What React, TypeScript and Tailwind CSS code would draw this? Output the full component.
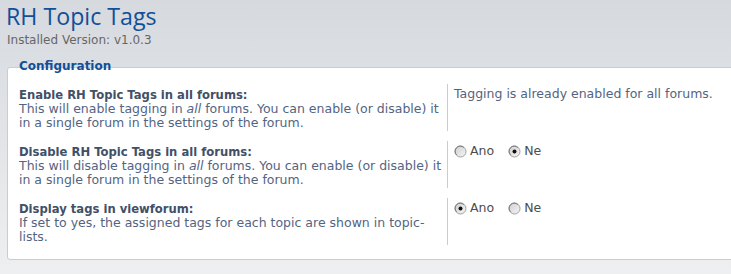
import React from "react";

function Radio({ checked }: { checked: boolean }) {
  return (
    <svg width="13" height="13" viewBox="0 0 13 13" className="shrink-0">
      <defs>
        <linearGradient id={checked ? "rg1" : "rg0"} x1="0" y1="0" x2="1" y2="1">
          <stop offset="0" stopColor="#cfcfcf" />
          <stop offset="1" stopColor="#f6f6f6" />
        </linearGradient>
      </defs>
      <circle cx="6.5" cy="6.5" r="5.5" fill={`url(#${checked ? "rg1" : "rg0"})`} stroke="#a0a0a0" strokeWidth="1" />
      <path d="M2.6 9.8 A5 5 0 0 1 9.8 2.6" fill="none" stroke="#7a7a7a" strokeWidth="1" />
      {checked && <circle cx="6.5" cy="6.5" r="2" fill="#111" />}
    </svg>
  );
}

function RadioPair({ yes }: { yes: boolean }) {
  return (
    <div className="flex items-center text-[12.5px] leading-[14px] text-[#4d4d4d]">
      <label className="flex items-center gap-[3px]">
        <Radio checked={yes} />
        <span>Ano</span>
      </label>
      <label className="ml-[14px] flex items-center gap-[3px]">
        <Radio checked={!yes} />
        <span>Ne</span>
      </label>
    </div>
  );
}

function Row({
  title,
  desc,
  right,
}: {
  title: string;
  desc: React.ReactNode;
  right: React.ReactNode;
}) {
  return (
    <div className="flex py-[5px]">
      <div className="w-[429px] h-[47px] shrink-0 border-r border-[#cccccc] pt-[4px] pr-[3px]">
        <div className="font-bold text-[11.6px] leading-[14px] text-[#425067]">{title}</div>
        <div className="text-[12.5px] leading-[14px] text-[#536482]">{desc}</div>
      </div>
      <div className="pl-[6px] pt-[3px] text-[12.5px] leading-[14px] text-[#536482]">{right}</div>
    </div>
  );
}

export default function App() {
  return (
    <div
      className="w-[731px] h-[274px] overflow-hidden bg-gradient-to-b from-[#d6dadf] to-[#eeeff0] pl-[6px]"
      style={{ fontFamily: '"DejaVu Sans", Verdana, sans-serif' }}
    >
      <h1
        className="text-[23.2px] leading-[28px] text-[#115098] pt-[2px]"
        style={{ fontFamily: '"Open Sans", "Trebuchet MS", sans-serif' }}
      >
        RH Topic Tags
      </h1>
      <p className="text-[12px] leading-[14px] text-[#666666] pl-[1px] mt-[3px]">Installed Version: v1.0.3</p>
      <div className="relative mt-[20px] ml-[1px] -mr-[10px] border border-[#cccccc] rounded-[3px] bg-white pl-[11px] pt-[11px] pb-[9px]">
        <div className="absolute left-[10px] -top-[9px] px-[1px] text-[12px] font-bold leading-[14px] text-[#115098]">
          Configuration
        </div>
        <Row
          title="Enable RH Topic Tags in all forums:"
          desc={
            <>
              This will enable tagging in <i>all</i> forums. You can enable (or disable) it in a single forum in the settings of the forum.
            </>
          }
          right={<span>Tagging is already enabled for all forums.</span>}
        />
        <Row
          title="Disable RH Topic Tags in all forums:"
          desc={
            <>
              This will disable tagging in <i>all</i> forums. You can enable (or disable) it in a single forum in the settings of the forum.
            </>
          }
          right={<RadioPair yes={false} />}
        />
        <Row
          title="Display tags in viewforum:"
          desc={<>If set to yes, the assigned tags for each topic are shown in topic-lists.</>}
          right={<RadioPair yes={true} />}
        />
      </div>
    </div>
  );
}
